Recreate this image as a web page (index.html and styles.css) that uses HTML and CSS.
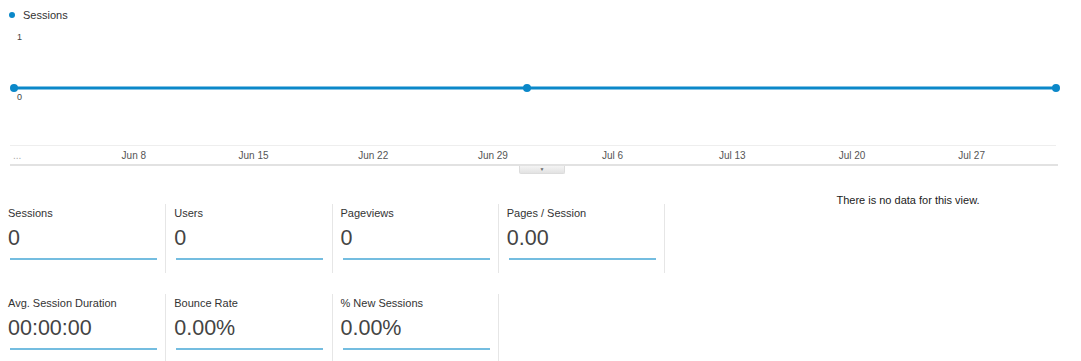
FILE: index.html
```html
<!DOCTYPE html>
<html lang="en">
<head>
    <meta charset="UTF-8">
    <meta name="viewport" content="width=device-width, initial-scale=1.0">
    <title>Audience Overview</title>
    <link rel="stylesheet" href="styles.css">
</head>
<body>
    <div class="chart">
        <div class="legend"><span class="legend-dot"></span>Sessions</div>
        <div class="plot">
            <svg class="plot-svg" width="1081" height="121" viewBox="0 0 1081 121">
                <line x1="10" y1="120.5" x2="1056" y2="120.5" stroke="#eeeeee" stroke-width="1"/>
                <line x1="14" y1="63" x2="1056" y2="63" stroke="#0b88c9" stroke-width="3"/>
                <circle cx="14" cy="63" r="4" fill="#0b88c9"/>
                <circle cx="527" cy="63" r="4" fill="#0b88c9"/>
                <circle cx="1056" cy="63" r="4" fill="#0b88c9"/>
            </svg>
            <span class="y-label y-top">1</span>
            <span class="y-label y-zero">0</span>
        </div>
        <div class="axis">
            <span class="axis-start">...</span>
            <span class="axis-label">Jun 8</span>
            <span class="axis-label">Jun 15</span>
            <span class="axis-label">Jun 22</span>
            <span class="axis-label">Jun 29</span>
            <span class="axis-label">Jul 6</span>
            <span class="axis-label">Jul 13</span>
            <span class="axis-label">Jul 20</span>
            <span class="axis-label">Jul 27</span>
        </div>
        <div class="tab">&#9660;</div>
    </div>

    <div class="overview">
        <div class="metrics">
            <div class="metric">
                <div class="metric-label">Sessions</div>
                <div class="metric-value">0</div>
                <div class="metric-bar"></div>
            </div>
            <div class="metric">
                <div class="metric-label">Users</div>
                <div class="metric-value">0</div>
                <div class="metric-bar"></div>
            </div>
            <div class="metric">
                <div class="metric-label">Pageviews</div>
                <div class="metric-value">0</div>
                <div class="metric-bar"></div>
            </div>
            <div class="metric">
                <div class="metric-label">Pages / Session</div>
                <div class="metric-value">0.00</div>
                <div class="metric-bar"></div>
            </div>
            <div class="metric">
                <div class="metric-label">Avg. Session Duration</div>
                <div class="metric-value">00:00:00</div>
                <div class="metric-bar"></div>
            </div>
            <div class="metric">
                <div class="metric-label">Bounce Rate</div>
                <div class="metric-value">0.00%</div>
                <div class="metric-bar"></div>
            </div>
            <div class="metric">
                <div class="metric-label">% New Sessions</div>
                <div class="metric-value">0.00%</div>
                <div class="metric-bar"></div>
            </div>
        </div>
        <div class="no-data">There is no data for this view.</div>
    </div>
</body>
</html>
```

FILE: styles.css
```css
body {
    font-family: 'Liberation Sans', Arial, sans-serif;
    background: #ffffff;
    color: #333;
    margin: 0;
    padding: 0;
}
.chart {
    width: 1081px;
}
.legend {
    display: flex;
    align-items: center;
    height: 25px;
    padding-left: 9px;
    padding-top: 5px;
    box-sizing: border-box;
    font-size: 11px;
    color: #333;
}
.legend-dot {
    width: 6px;
    height: 6px;
    border-radius: 50%;
    background: #0b88c9;
    margin-right: 8px;
}
.plot {
    position: relative;
    height: 121px;
}
.plot-svg {
    display: block;
}
.y-label {
    position: absolute;
    left: 17px;
    font-size: 9px;
    line-height: 11px;
    color: #444;
}
.y-top {
    top: 7px;
}
.y-zero {
    top: 67px;
}
.axis {
    display: flex;
    align-items: center;
    width: 1048px;
    height: 18px;
    margin-left: 10px;
    border-bottom: 2px solid #e2e2e2;
    font-size: 10px;
    color: #555;
}
.axis-start {
    width: 64px;
    padding-left: 3px;
    box-sizing: border-box;
    color: #aaa;
}
.axis-label {
    width: 119.7px;
    text-align: center;
}
.tab {
    width: 44px;
    height: 7px;
    margin-left: 519px;
    background: linear-gradient(#f4f4f4, #e2e2e2);
    border: 1px solid #dcdcdc;
    border-top: none;
    border-radius: 0 0 2px 2px;
    font-size: 5px;
    line-height: 7px;
    text-align: center;
    color: #666;
}
.overview {
    display: flex;
    padding-top: 20px;
}
.metrics {
    display: grid;
    grid-template-columns: repeat(4, 166.25px);
    row-gap: 21px;
    padding-top: 10px;
    width: 665px;
}
.metric {
    height: 69px;
    padding: 3px 0 0 8px;
    box-sizing: border-box;
    border-right: 1px solid #e6e6e6;
}
.metric-label {
    font-size: 11px;
    line-height: 13px;
    color: #333;
}
.metric-value {
    margin-top: 5px;
    font-size: 21.5px;
    line-height: 26px;
    color: #444;
}
.metric-bar {
    width: 147px;
    height: 2px;
    margin: 7px 0 0 2px;
    background: #74bde0;
}
.no-data {
    flex: 1;
    padding-left: 70px;
    margin-top: -1px;
    text-align: center;
    font-size: 11px;
    line-height: 14px;
    color: #222;
}
```
